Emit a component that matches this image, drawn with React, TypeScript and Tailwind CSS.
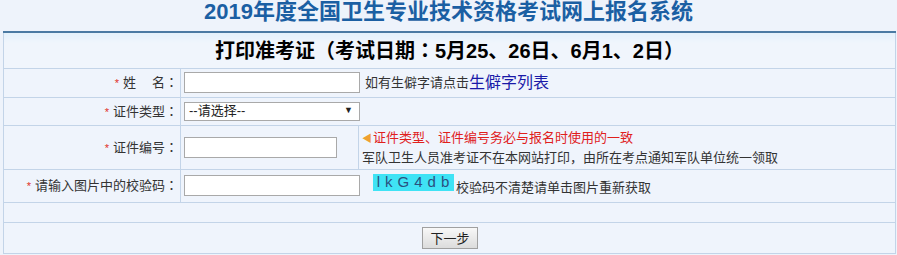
import React from "react"

const font = { fontFamily: '"Liberation Sans", "Noto Sans CJK SC", sans-serif' }
const tc = { fontFamily: '"Noto Sans CJK TC", sans-serif' }

// centred full-width colon, as the original page's font draws it
const Colon = () => <span style={tc}>：</span>

function Label({ text }: { text: React.ReactNode }) {
  return (
    <td className="w-[177px] whitespace-nowrap border border-[#c3d4e8] pr-[2px] text-right text-[13px] text-[#333]">
      <span className="mr-[4px] text-[11px] text-[#e0301e]">*</span>
      {text}
      <Colon />
    </td>
  )
}

export default function App() {
  return (
    <div className="h-[255px] w-[897px] overflow-hidden bg-[#eef3fb] [text-spacing-trim:space-all]" style={font}>
      <div className="h-[31px] text-center text-[22px] font-bold leading-[23px] text-[#1b5fa3]">
        2019年度全国卫生专业技术资格考试网上报名系统
      </div>
      <table className="ml-[3px] w-[893px] border-collapse border-t-[2px] border-t-[#4b7aa3] bg-[#eff4fc]">
        <tbody>
          <tr className="h-[36px]">
            <td colSpan={2} className="border border-[#c3d4e8] border-t-[#4b7aa3] bg-gradient-to-b from-[#e4f1fb] to-[#f0f5fc] to-[30%] text-center text-[20px] font-bold text-black">
              打印准考证（考试日期<Colon />5月25、26日、6月1、2日）
            </td>
          </tr>
          <tr className="h-[29px]">
            <Label text={<>姓<span className="inline-block w-[16px]" />名</>} />
            <td className="border border-[#c3d4e8] pl-[3px] text-[13px] text-[#333]">
              <div className="flex items-center whitespace-nowrap">
                <input className="h-[21px] w-[176px] border border-[#a9a9a9] bg-white" />
                <span className="ml-[5px]">如有生僻字请点击</span>
                <a className="text-[16px] text-[#1a1aa8]">生僻字列表</a>
              </div>
            </td>
          </tr>
          <tr className="h-[28px]">
            <Label text="证件类型" />
            <td className="border border-[#c3d4e8] pl-[3px]">
              <div className="flex h-[19px] w-[176px] items-center justify-between border border-[#a9a9a9] bg-white pl-[4px] pr-[6px] text-[13px] text-[#222]">
                <span>--请选择--</span>
                <span className="text-[9px]">▼</span>
              </div>
            </td>
          </tr>
          <tr className="h-[43px]">
            <Label text="证件编号" />
            <td className="border border-[#c3d4e8] p-0">
              <div className="flex h-[43px] items-stretch">
                <div className="flex w-[178px] items-center border-r border-[#c3d4e8] pl-[3px]">
                  <input className="h-[21px] w-[153px] border border-[#a9a9a9] bg-white" />
                </div>
                <div className="flex flex-col justify-center whitespace-nowrap pl-[3px] text-[13px] leading-[19px]">
                  <div className="text-[#e0201c]">
                    <span className="mr-[1px] text-[10px] text-[#f0a030]">◀</span>证件类型、证件编号务必与报名时使用的一致
                  </div>
                  <div className="text-[#333]">军队卫生人员准考证不在本网站打印，由所在考点通知军队单位统一领取</div>
                </div>
              </div>
            </td>
          </tr>
          <tr className="h-[33px]">
            <Label text="请输入图片中的校验码" />
            <td className="border border-[#c3d4e8] pl-[3px] text-[13px] text-[#333]">
              <div className="flex items-center whitespace-nowrap">
                <input className="h-[21px] w-[176px] border border-[#a9a9a9] bg-white" />
                <div className="-mt-[6px] ml-[13px] flex h-[17px] w-[81px] items-center justify-center bg-[#3fe3f5] pl-[4px] text-[15px] tracking-[5px] text-[#2a5080]">
                  lkG4db
                </div>
                <span className="ml-[2px] mt-[5px]">校验码不清楚请单击图片重新获取</span>
              </div>
            </td>
          </tr>
          <tr className="h-[20px]">
            <td colSpan={2} className="border border-[#c3d4e8]" />
          </tr>
          <tr className="h-[31px]">
            <td colSpan={2} className="border border-[#c3d4e8] text-center">
              <button className="ml-[1px] h-[22px] w-[56px] border border-[#a0a0a0] bg-gradient-to-b from-[#f8f8f8] to-[#dcdcdc] text-[13px] text-[#222]">
                下一步
              </button>
            </td>
          </tr>
        </tbody>
      </table>
    </div>
  )
}
